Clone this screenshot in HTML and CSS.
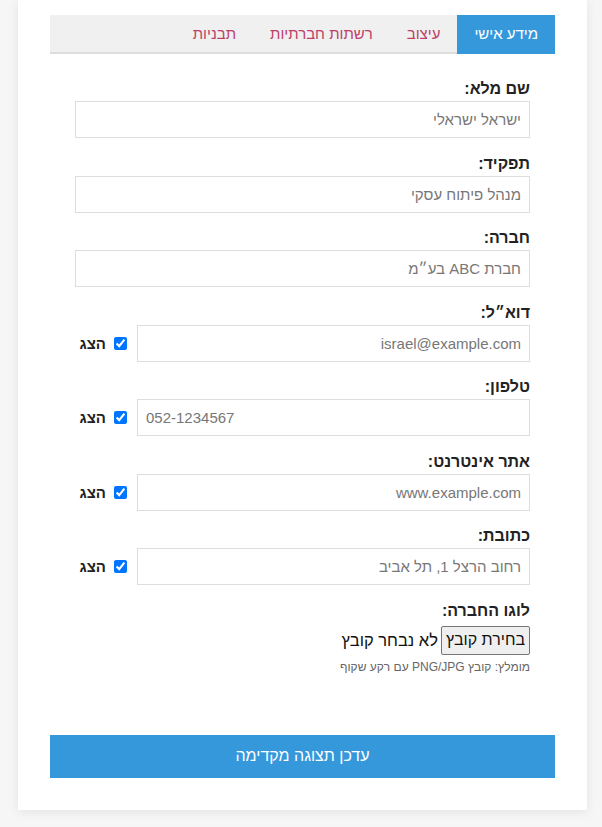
FILE: index.html
```html
<!DOCTYPE html>
<html lang="he" dir="rtl">
<head>
<meta charset="utf-8">
<title>עורך חתימה</title>
<link rel="stylesheet" href="styles.css">
</head>
<body>
<div class="card">
  <nav class="tabs">
    <div class="tab active">מידע אישי</div>
    <div class="tab">עיצוב</div>
    <div class="tab">רשתות חברתיות</div>
    <div class="tab">תבניות</div>
  </nav>
  <div class="tab-content">
    <div class="group">
      <label class="label">שם מלא:</label>
      <input class="field" type="text" placeholder="ישראל ישראלי">
    </div>
    <div class="group">
      <label class="label">תפקיד:</label>
      <input class="field" type="text" placeholder="מנהל פיתוח עסקי">
    </div>
    <div class="group">
      <label class="label">חברה:</label>
      <input class="field" type="text" placeholder="חברת ABC בע״מ">
    </div>
    <div class="group">
      <label class="label">דוא״ל:</label>
      <div class="row">
        <input class="field" type="text" placeholder="israel@example.com">
        <label class="show"><input type="checkbox" checked>הצג</label>
      </div>
    </div>
    <div class="group">
      <label class="label">טלפון:</label>
      <div class="row">
        <input class="field ltr" type="text" placeholder="052-1234567">
        <label class="show"><input type="checkbox" checked>הצג</label>
      </div>
    </div>
    <div class="group">
      <label class="label">אתר אינטרנט:</label>
      <div class="row">
        <input class="field" type="text" placeholder="www.example.com">
        <label class="show"><input type="checkbox" checked>הצג</label>
      </div>
    </div>
    <div class="group">
      <label class="label">כתובת:</label>
      <div class="row">
        <input class="field" type="text" placeholder="רחוב הרצל 1, תל אביב">
        <label class="show"><input type="checkbox" checked>הצג</label>
      </div>
    </div>
    <div class="group file-group">
      <label class="label file-label">לוגו החברה:</label>
      <div class="file">
        <button class="file-btn" type="button">בחירת קובץ</button>
        <span class="file-name">לא נבחר קובץ</span>
      </div>
      <div class="hint">מומלץ: קובץ PNG/JPG עם רקע שקוף</div>
    </div>
  </div>
  <button class="update" type="button">עדכן תצוגה מקדימה</button>
</div>
</body>
</html>
```

FILE: styles.css
```css
html, body {
  margin: 0;
  padding: 0;
}

body {
  background: #f6f6f6;
  font-family: "Liberation Sans", "Open Sans", "DejaVu Sans", sans-serif;
  color: #222;
  padding: 0 15px 18px 18px;
}

.card {
  background: #fff;
  box-shadow: 0 2px 10px rgba(0, 0, 0, 0.08);
  padding: 15px 32px 32px;
}

.tabs {
  display: flex;
  background: #f0f0f0;
  border-bottom: 2px solid #dddddd;
  height: 37px;
}

.tab {
  padding: 0 17px;
  height: 39px;
  line-height: 38px;
  font-size: 15px;
  color: #bd4068;
  box-sizing: border-box;
}

.tab.active {
  background: #3498db;
  color: #fff;
}

.tab-content {
  padding: 25px 25px 0;
}

.group {
  margin-bottom: 15.5px;
}

.label {
  display: block;
  font-weight: bold;
  font-size: 16px;
  line-height: 20px;
  margin-bottom: 2px;
  color: #222;
}

.field {
  display: block;
  width: 100%;
  box-sizing: border-box;
  height: 37px;
  border: 1px solid #dddddd;
  padding: 0 8px;
  font-family: inherit;
  font-size: 15px;
  color: #333;
  background: #fff;
  outline: none;
}

.field::placeholder {
  color: #777;
}

.field.ltr {
  direction: ltr;
  text-align: left;
}

.field.ltr::placeholder {
  text-align: left;
}

.row {
  display: flex;
  align-items: center;
  gap: 10px;
}

.row .field {
  flex: 1;
}

.show {
  display: flex;
  align-items: center;
  gap: 8px;
  width: 52px;
  font-weight: bold;
  font-size: 15px;
  color: #222;
}

.show input {
  margin: 0;
  width: 13px;
  height: 13px;
}

.file-label {
  margin-bottom: 5px;
}

.file {
  display: flex;
  align-items: center;
  gap: 3px;
  font-size: 16.5px;
}

.file-btn {
  height: 29px;
  padding: 0 4px;
  border: 1px solid #767676;
  border-radius: 2px;
  background: #efefef;
  font-family: inherit;
  font-size: 16px;
  color: #111;
}

.file-name {
  color: #111;
}

.hint {
  margin-top: 4px;
  font-size: 12px;
  line-height: 16px;
  color: #666;
}

.file-group {
  margin-bottom: 0;
}

.update {
  display: block;
  width: 100%;
  margin-top: 60px;
  height: 43px;
  border: none;
  background: #3498db;
  color: #fff;
  font-family: inherit;
  font-size: 16px;
}
```
